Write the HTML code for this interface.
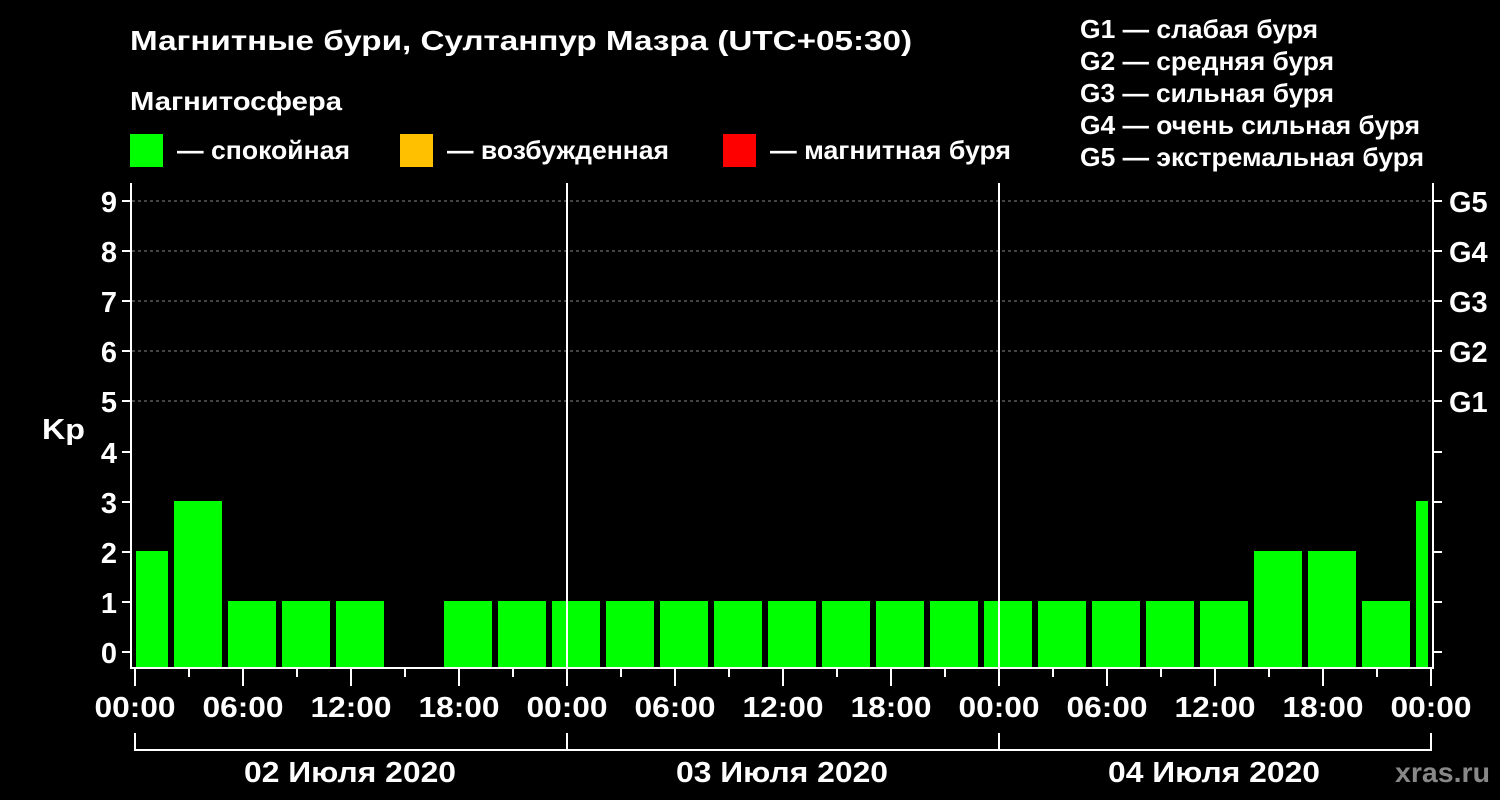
<!DOCTYPE html><html><head><style>body{margin:0;background:#000}svg{display:block}text{font-family:"Liberation Sans",sans-serif;font-weight:bold;fill:#fff}</style></head><body>
<svg width="1500" height="800" xmlns="http://www.w3.org/2000/svg">
<rect width="1500" height="800" fill="#000"/>
<text x="130" y="50" font-size="28" textLength="782" lengthAdjust="spacingAndGlyphs">Магнитные бури, Султанпур Мазра (UTC+05:30)</text>
<text x="130" y="110" font-size="26" textLength="212" lengthAdjust="spacingAndGlyphs">Магнитосфера</text>
<rect x="130" y="134" width="33" height="33" fill="#00ff00"/><text x="177" y="159" font-size="26" textLength="173" lengthAdjust="spacingAndGlyphs">— спокойная</text>
<rect x="400" y="134" width="33" height="33" fill="#ffc000"/><text x="447" y="159" font-size="26" textLength="222" lengthAdjust="spacingAndGlyphs">— возбужденная</text>
<rect x="723" y="134" width="33" height="33" fill="#ff0000"/><text x="770" y="159" font-size="26" textLength="241" lengthAdjust="spacingAndGlyphs">— магнитная буря</text>
<g font-size="26"><text x="1080" y="38" textLength="238" lengthAdjust="spacingAndGlyphs">G1 — слабая буря</text><text x="1080" y="70" textLength="254" lengthAdjust="spacingAndGlyphs">G2 — средняя буря</text><text x="1080" y="102" textLength="254" lengthAdjust="spacingAndGlyphs">G3 — сильная буря</text><text x="1080" y="134" textLength="340" lengthAdjust="spacingAndGlyphs">G4 — очень сильная буря</text><text x="1080" y="166" textLength="344" lengthAdjust="spacingAndGlyphs">G5 — экстремальная буря</text></g>
<g stroke="#888" stroke-dasharray="3,3" stroke-width="1"><line x1="132" x2="1432" y1="201" y2="201"/><line x1="132" x2="1432" y1="251" y2="251"/><line x1="132" x2="1432" y1="301" y2="301"/><line x1="132" x2="1432" y1="351" y2="351"/><line x1="132" x2="1432" y1="401" y2="401"/></g>
<g fill="#00ff00">
<rect x="136" y="551" width="32" height="117"/>
<rect x="174" y="501" width="48" height="167"/>
<rect x="228" y="601" width="48" height="67"/><rect x="282" y="601" width="48" height="67"/><rect x="336" y="601" width="48" height="67"/>
<rect x="444" y="601" width="48" height="67"/><rect x="498" y="601" width="48" height="67"/><rect x="552" y="601" width="48" height="67"/><rect x="606" y="601" width="48" height="67"/><rect x="660" y="601" width="48" height="67"/><rect x="714" y="601" width="48" height="67"/><rect x="768" y="601" width="48" height="67"/><rect x="822" y="601" width="48" height="67"/><rect x="876" y="601" width="48" height="67"/><rect x="930" y="601" width="48" height="67"/><rect x="984" y="601" width="48" height="67"/><rect x="1038" y="601" width="48" height="67"/><rect x="1092" y="601" width="48" height="67"/><rect x="1146" y="601" width="48" height="67"/><rect x="1200" y="601" width="48" height="67"/>
<rect x="1254" y="551" width="48" height="117"/><rect x="1308" y="551" width="48" height="117"/>
<rect x="1362" y="601" width="48" height="67"/>
<rect x="1416" y="501" width="12" height="167"/>
</g>
<g stroke="#fff" stroke-width="2" fill="none">
<line x1="131" y1="183" x2="131" y2="669"/><line x1="1433" y1="183" x2="1433" y2="669"/><line x1="130" y1="668" x2="1434" y2="668"/>
<line x1="567" y1="183" x2="567" y2="668"/><line x1="999" y1="183" x2="999" y2="668"/>
<path d="M122 201h9M122 251h9M122 301h9M122 351h9M122 401h9M122 452h9M122 502h9M122 552h9M122 602h9M122 652h9"/>
<path d="M1433 201h9M1433 251h9M1433 301h9M1433 351h9M1433 401h9M1433 452h9M1433 502h9M1433 552h9M1433 602h9M1433 652h9"/>
<path d="M135 668v18M189 668v9M243 668v18M297 668v9M351 668v18M405 668v9M459 668v18M513 668v9M567 668v18M621 668v9M675 668v18M729 668v9M783 668v18M837 668v9M891 668v18M945 668v9M999 668v18M1053 668v9M1107 668v18M1161 668v9M1215 668v18M1269 668v9M1323 668v18M1377 668v9M1431 668v18"/>
<path d="M135 733v17h1296v-17M567 733v17M999 733v17"/>
</g>
<g font-size="29" text-anchor="end"><text x="117" y="212">9</text><text x="117" y="262">8</text><text x="117" y="312">7</text><text x="117" y="362">6</text><text x="117" y="412">5</text><text x="117" y="463">4</text><text x="117" y="513">3</text><text x="117" y="563">2</text><text x="117" y="613">1</text><text x="117" y="663">0</text></g>
<text x="42" y="439" font-size="29" textLength="43" lengthAdjust="spacingAndGlyphs">Kp</text>
<g font-size="29"><text x="1449" y="212">G5</text><text x="1449" y="262">G4</text><text x="1449" y="312">G3</text><text x="1449" y="362">G2</text><text x="1449" y="412">G1</text></g>
<g font-size="29" text-anchor="middle"><text x="135" y="717" textLength="81" lengthAdjust="spacingAndGlyphs">00:00</text><text x="243" y="717" textLength="81" lengthAdjust="spacingAndGlyphs">06:00</text><text x="351" y="717" textLength="81" lengthAdjust="spacingAndGlyphs">12:00</text><text x="459" y="717" textLength="81" lengthAdjust="spacingAndGlyphs">18:00</text><text x="567" y="717" textLength="81" lengthAdjust="spacingAndGlyphs">00:00</text><text x="675" y="717" textLength="81" lengthAdjust="spacingAndGlyphs">06:00</text><text x="783" y="717" textLength="81" lengthAdjust="spacingAndGlyphs">12:00</text><text x="891" y="717" textLength="81" lengthAdjust="spacingAndGlyphs">18:00</text><text x="999" y="717" textLength="81" lengthAdjust="spacingAndGlyphs">00:00</text><text x="1107" y="717" textLength="81" lengthAdjust="spacingAndGlyphs">06:00</text><text x="1215" y="717" textLength="81" lengthAdjust="spacingAndGlyphs">12:00</text><text x="1323" y="717" textLength="81" lengthAdjust="spacingAndGlyphs">18:00</text><text x="1431" y="717" textLength="81" lengthAdjust="spacingAndGlyphs">00:00</text>
<text x="350" y="782" textLength="212" lengthAdjust="spacingAndGlyphs">02 Июля 2020</text><text x="782" y="782" textLength="212" lengthAdjust="spacingAndGlyphs">03 Июля 2020</text><text x="1214" y="782" textLength="212" lengthAdjust="spacingAndGlyphs">04 Июля 2020</text></g>
<text x="1395" y="782" font-size="28" textLength="95" lengthAdjust="spacingAndGlyphs" style="fill:#888">xras.ru</text>
</svg></body></html>
